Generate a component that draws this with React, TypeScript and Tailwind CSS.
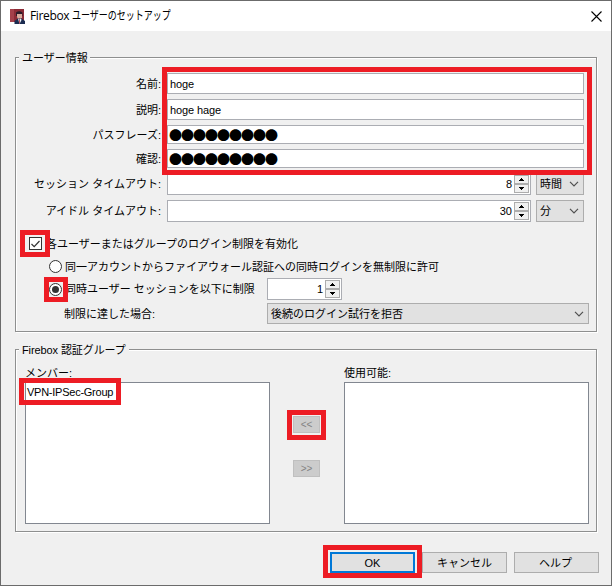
import type { ReactNode } from "react";

function Etched({ title, titleClass, className, children }: { title: ReactNode; titleClass: string; className: string; children: ReactNode }) {
  return (
    <section className={`relative ml-[14px] w-[582px] border border-[#8e8f8f] shadow-[1px_1px_0_#fff,inset_1px_1px_0_#fff] ${className}`}>
      <h2 className={`absolute -top-[8px] left-[3px] bg-[#f0f0f0] pl-[3px] leading-[17px] whitespace-nowrap ${titleClass}`}>{title}</h2>
      {children}
    </section>
  );
}

function Label({ text, className = "" }: { text: string; className?: string }) {
  return <span className={`mr-[6px] w-[145px] shrink-0 text-right whitespace-nowrap ${className}`}>{text}</span>;
}

function Chevron() {
  return (
    <svg width="10" height="6" viewBox="0 0 10 6" fill="none" stroke="#505050" strokeWidth="1.2">
      <path d="M1 .8l4 4 4-4" />
    </svg>
  );
}

function Arrow({ up }: { up?: boolean }) {
  return (
    <span className="flex h-[9px] w-[15px] items-center justify-center border border-[#adadad] bg-[#f0f0f0]">
      <svg width="5" height="3" viewBox="0 0 5 3" shapeRendering="crispEdges">
        <path d={up ? "M2 0h1v1h1v1h1v1H0V2h1V1h1z" : "M0 0h5v1H4v1H3v1H2V2H1V1H0z"} fill="#000" />
      </svg>
    </span>
  );
}

function Spinner({ value, className }: { value: string; className: string }) {
  return (
    <div className={`flex h-[22px] items-center justify-end border border-[#abadb3] bg-white pr-px ${className}`}>
      <span className="mr-[2px]">{value}</span>
      <span className="flex flex-col">
        <Arrow up />
        <Arrow />
      </span>
    </div>
  );
}

function Combo({ value, className }: { value: string; className: string }) {
  return (
    <div className={`flex items-center justify-between border border-[#adadad] bg-[#e1e1e1] pl-[3px] pr-[4px] whitespace-nowrap ${className}`}>
      <span>{value}</span>
      <Chevron />
    </div>
  );
}

function Radio({ checked }: { checked?: boolean }) {
  return (
    <span className="flex size-[13px] shrink-0 items-center justify-center rounded-full border border-[#333] bg-white">
      {checked && <span className="size-[7px] rounded-full bg-[#333]" />}
    </span>
  );
}

function Mark({ className }: { className: string }) {
  return <div className={`pointer-events-none absolute border-5 border-[#ed1c24] ${className}`} />;
}

function AppIcon() {
  return (
    <svg width="15" height="15" viewBox="0 0 15 15">
      <path d="M0 0h14v13H0z" fill="#8c2b36" />
      <path d="M0 0h4v13H0z" fill="#a5404a" />
      <path d="M6 3.5q3-2.5 6.5 0V7H6z" fill="#2a1d2a" />
      <path d="M7 5h5v3.5L10.500 10H8L7 8z" fill="#d8aa9c" />
      <path d="M4.500 15v-3L8 9.500h3.500L15 12v3z" fill="#1b2c50" />
      <path d="M8 9.500l1.500 1 1.500-1 .5 1.500L9.500 15z" fill="#f4f4f8" />
      <path d="M9.200 10.500h.8v4h-.8z" fill="#b52c38" />
    </svg>
  );
}

const fields = [
  { label: "名前:", value: "hoge", size: "h-[21px] mb-[5px]" },
  { label: "説明:", value: "hoge hage", size: "h-[21px] mb-[5px]" },
  { label: "パスフレーズ:", value: "●●●●●●●●●", size: "h-[19px] mb-[5px]", secret: true },
  { label: "確認:", value: "●●●●●●●●●", size: "h-[19px] mb-[5px]", secret: true },
];

export default function App() {
  return (
    <main className="relative flex h-[586px] w-[612px] flex-col overflow-hidden border border-[#6b6b6b] bg-[#f0f0f0] font-['Liberation_Sans','Noto_Sans_CJK_JP',sans-serif] text-[11px] leading-[14px] text-black">
      <header className="flex h-[30px] shrink-0 items-center bg-white pl-[9px] pr-[9px]">
        <AppIcon />
        <h1 className="ml-[5px] flex font-['Open_Sans','Noto_Sans_CJK_JP',sans-serif] text-[12px] whitespace-nowrap">
          <span className="w-[42px] tracking-[-0.35px]">Firebox</span>
          <span className="origin-left scale-x-[0.75]">ユーザーのセットアップ</span>
        </h1>
        <svg className="ml-auto" width="11" height="11" viewBox="0 0 11 11" stroke="#000" strokeWidth="1.1">
          <path d="M.5.5l10 10M10.5.5l-10 10" />
        </svg>
      </header>

      <Etched title="ユーザー情報" titleClass="w-[71px]" className="mt-[26px] h-[275px] shrink-0 pt-[15px]">
        {fields.map((f) => (
          <div key={f.label} className={`flex items-center ${f.size}`}>
            <Label text={f.label} />
            <div className="flex h-full w-[417px] items-center border border-[#abadb3] bg-white pl-[2px]">
              <span className={f.secret ? "-ml-px font-['Noto_Sans_CJK_JP',sans-serif] text-[13px] leading-none tracking-[-1px]" : "tracking-[-0.1px]"}>{f.value}</span>
            </div>
          </div>
        ))}
        <div className="mb-[5px] flex items-center">
          <Label text="セッション タイムアウト:" />
          <Spinner value="8" className="w-[364px]" />
          <Combo value="時間" className="ml-[5px] h-[22px] w-12" />
        </div>
        <div className="flex items-center">
          <Label text="アイドル タイムアウト:" />
          <Spinner value="30" className="w-[364px]" />
          <Combo value="分" className="ml-[5px] h-[22px] w-12" />
        </div>

        <div className="mt-[15px] flex h-[13px] items-center pl-[13px]">
          <span className="flex size-[13px] items-center justify-center border border-[#333] bg-white">
            <svg width="9" height="8" viewBox="0 0 9 8" fill="none" stroke="#333" strokeWidth="1.2">
              <path d="M.5 4l2.7 2.7L8.5 1" />
            </svg>
          </span>
          <span className="ml-[4px] whitespace-nowrap">各ユーザーまたはグループのログイン制限を有効化</span>
        </div>
        <div className="mt-[10px] flex h-[13px] items-center pl-[33px]">
          <Radio />
          <span className="ml-[3px] whitespace-nowrap">同一アカウントからファイアウォール認証への同時ログインを無制限に許可</span>
        </div>
        <div className="mt-[5px] flex h-[22px] items-center pl-[33px]">
          <Radio checked />
          <span className="ml-[3px] w-[202px] whitespace-nowrap">同時ユーザー セッションを以下に制限</span>
          <Spinner value="1" className="w-[75px]" />
        </div>
        <div className="mt-[3px] flex items-center pl-12">
          <span className="w-[203px]">制限に達した場合:</span>
          <Combo value="後続のログイン試行を拒否" className="h-[21px] w-[322px]" />
        </div>
      </Etched>

      <Etched title="Firebox 認証グループ" titleClass="w-[110px] tracking-[-0.1px]" className="mt-[17px] flex h-[183px] shrink-0 pl-[9px] pt-[16px]">
        <div className="w-[245px]">
          <div className="h-4">メンバー:</div>
          <div className="h-[142px] border border-[#828790] bg-white pl-px pt-[2px] tracking-[-0.25px]">VPN-IPSec-Group</div>
        </div>
        <div className="flex w-[74px] flex-col items-center pt-[50px] pr-px text-[#838383]">
          <button className="h-[17px] w-[27px] border border-[#bfbfbf] bg-[#ccc] pt-px text-[10px] leading-[14px]">&lt;&lt;</button>
          <button className="mt-[27px] h-[17px] w-[27px] border border-[#bfbfbf] bg-[#ccc] pt-px text-[10px] leading-[14px]">&gt;&gt;</button>
        </div>
        <div className="w-[245px]">
          <div className="h-4">使用可能:</div>
          <div className="h-[142px] border border-[#828790] bg-white" />
        </div>
      </Etched>

      <footer className="mt-5 flex pl-[329px]">
        <button className="h-[21px] w-[85px] border-2 border-[#0078d7] bg-[#e1e1e1]">OK</button>
        <button className="ml-[7px] h-[21px] w-[85px] border border-[#adadad] bg-[#e1e1e1]">キャンセル</button>
        <button className="ml-[7px] h-[21px] w-[85px] border border-[#adadad] bg-[#e1e1e1] pr-[2px]">ヘルプ</button>
      </footer>

      <Mark className="left-[161px] top-[66px] h-[108px] w-[430px]" />
      <Mark className="left-[19px] top-[229px] h-[27px] w-[30px]" />
      <Mark className="left-[43px] top-[276px] h-[25px] w-[24px]" />
      <Mark className="left-[18px] top-[377px] h-[27px] w-[102px]" />
      <Mark className="left-[286px] top-[409px] h-[30px] w-[39px]" />
      <Mark className="left-[322px] top-[544px] h-[33px] w-[99px]" />

      <div className="absolute -left-px top-[470px] h-[51px] w-px bg-[#111]" />
      <div className="absolute -right-px top-[500px] h-[21px] w-px bg-[#111]" />
      <div className="absolute -bottom-px -left-px h-px w-[19px] bg-[#1d4f60]" />
    </main>
  );
}
